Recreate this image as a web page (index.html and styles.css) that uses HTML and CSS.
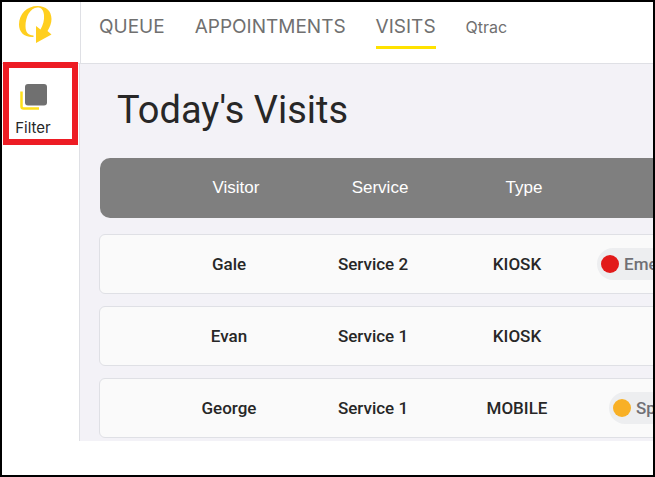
FILE: index.html
```html
<!DOCTYPE html>
<html lang="en">
<head>
    <meta charset="UTF-8">
    <meta name="viewport" content="width=device-width, initial-scale=1.0">
    <title>Today's Visits</title>
    <link rel="stylesheet" href="styles.css">
</head>
<body>

    <header class="topbar">
        <a class="logo" href="#" aria-label="Home">
            <svg width="36" height="40" viewBox="0 0 36 40">
                <path fill="#ffcf1f" d="M19.500 1 C28 1 33.500 6 33.500 14 C33.500 18 32 22 29.500 26 L33.500 29.500 L18 38 L18 21 L22.500 24.500 C25 20 26.500 15 26 10 C25.500 5 23.500 2.500 19.500 2.500 C12 3 7.500 12 7.500 21 C7.500 27 10 30.500 15.500 30.500 L15.500 32 C6 32.500 1 27 1 19.500 C1 9 9 1 19.500 1 Z"/>
            </svg>
        </a>
        <nav class="tabs">
            <a href="#">QUEUE</a>
            <a href="#">APPOINTMENTS</a>
            <a class="active" href="#">VISITS</a>
            <a class="account" href="#">Qtrac</a>
        </nav>
    </header>

    <div class="layout">
        <aside class="sidebar">
            <button class="filter" type="button">
                <svg width="28" height="28" viewBox="0 0 28 28">
                    <path d="M2.500 8.500 V23.500 Q2.500 25.500 4.500 25.500 H20" fill="none" stroke="#ffe01a" stroke-width="2.500"/>
                    <rect x="6" y="1" width="22" height="21.500" rx="3" fill="#707070"/>
                </svg>
                Filter
            </button>
        </aside>

        <main class="content">
            <h1>Today's Visits</h1>
            <table class="visits">
                <thead>
                    <tr>
                        <th>Visitor</th>
                        <th>Service</th>
                        <th>Type</th>
                        <th></th>
                    </tr>
                </thead>
                <tbody>
                    <tr>
                        <td>Gale</td>
                        <td>Service 2</td>
                        <td>KIOSK</td>
                        <td><span class="tag red">Emergency</span></td>
                    </tr>
                    <tr>
                        <td>Evan</td>
                        <td>Service 1</td>
                        <td>KIOSK</td>
                        <td></td>
                    </tr>
                    <tr>
                        <td>George</td>
                        <td>Service 1</td>
                        <td>MOBILE</td>
                        <td><span class="tag orange">Spanish</span></td>
                    </tr>
                </tbody>
            </table>
        </main>
    </div>

</body>
</html>
```
FILE: styles.css
```css
* {
    box-sizing: border-box;
}

body {
    margin: 0;
    min-height: 100vh;
    border: 2px solid #000;
    background-color: #fff;
    color: #272727;
    font-family: Roboto, sans-serif;
    overflow: hidden;
}

a {
    color: #707070;
    text-decoration: none;
}

/* Top bar */
.topbar {
    display: flex;
    height: 62px;
    border-bottom: 1px solid #dfe0e5;
}

.logo {
    width: 79px;
    padding: 3px 0 0 16px;
    border-right: 1px solid #dfe0e5;
}

.tabs {
    display: flex;
    align-items: flex-start;
    gap: 30px;
    padding: 9px 18px;
    font-family: Inter, sans-serif;
    font-size: 19px;
    line-height: 32px;
}

.tabs .active {
    padding-bottom: 3px;
    border-bottom: 3px solid #ffe200;
}

.tabs .account {
    font-size: 16px;
}

/* Page */
.layout {
    display: flex;
}

.sidebar {
    flex: none;
    width: 78px;
    border-right: 1px solid #dfe0e5;
}

/* highlighted button, sits over the top bar line */
.filter {
    position: relative;
    display: flex;
    flex-direction: column;
    align-items: center;
    gap: 7px;
    width: 75px;
    height: 83px;
    margin: -2px 0 0 1px;
    padding: 15px 15px 0 0;
    border: 6px solid #ed1c24;
    background-color: #fff;
    color: #272727;
    font-family: Inter, sans-serif;
    font-size: 15px;
    line-height: 20px;
}

.content {
    flex: 1;
    min-width: 0;
    padding: 21px 0 3px 19px;
    background-color: #f3f2f7;
    overflow: hidden;
}

h1 {
    margin: 0 0 23px 18px;
    font-size: 38px;
    font-weight: 400;
    line-height: 50px;
}

/* Visits table */
.visits,
.visits tbody {
    display: block;
    min-width: 720px;
}

.visits thead {
    display: block;
    margin: 0 0 16px 1px;
}

.visits tr {
    display: grid;
    grid-template-columns: repeat(4, 144px);
    align-items: center;
    height: 60px;
    padding-left: 57px;
    border: 1px solid #dfe0e5;
    border-radius: 6px;
    background-color: #fafafa;
}

.visits thead tr {
    padding-left: 64px;
    border: 0;
    border-radius: 10px;
    background-color: #7f7f7f;
}

.visits tbody tr + tr {
    margin-top: 12px;
}

.visits th,
.visits td {
    padding: 0;
    text-align: center;
    font-size: 17px;
    line-height: 20px;
}

.visits th {
    color: #fff;
    font-family: "Liberation Sans", Arial, sans-serif;
    font-weight: 400;
}

.visits td {
    font-weight: 500;
}

.tag {
    display: inline-flex;
    align-items: center;
    gap: 5px;
    height: 32px;
    padding: 0 16px 0 4px;
    border-radius: 16px;
    background-color: #edeef0;
    color: #707075;
}

.tag::before {
    content: "";
    width: 18px;
    height: 18px;
    border-radius: 50%;
}

.tag.red::before {
    background-color: #e21a1a;
}

.tag.orange::before {
    background-color: #f8b026;
}
```
